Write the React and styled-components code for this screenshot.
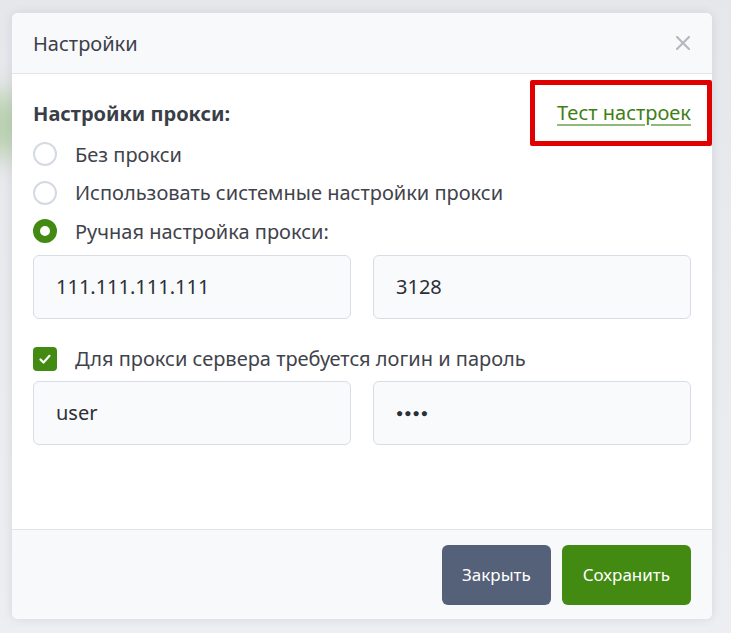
import React from "react";
import styled, { createGlobalStyle } from "styled-components";

const Global = createGlobalStyle`
  html, body { margin: 0; padding: 0; }
  body {
    background: #e9eaee;
    font-family: "Noto Sans", "Open Sans", sans-serif;
    width: 731px; height: 633px; overflow: hidden;
  }
`;

const Page = styled.div`
  position: relative;
  width: 731px;
  height: 633px;
  padding: 13px 19px 14px 12px;
  box-sizing: border-box;
  background: linear-gradient(180deg, #e6e7eb 0%, #eceef1 100%);
`;

const Blur = styled.div`
  position: absolute;
  left: -30px;
  top: 95px;
  width: 60px;
  height: 60px;
  background: #b9d0b0;
  filter: blur(14px);
`;

const Modal = styled.div`
  position: relative;
  height: 100%;
  background: #fff;
  border-radius: 6px;
  box-shadow: 0 0 10px rgba(60, 64, 80, 0.12);
  display: flex;
  flex-direction: column;
  overflow: hidden;
`;

const Header = styled.div`
  height: 60px;
  flex: none;
  background: #f8f9fa;
  border-bottom: 1px solid #e2e5ea;
  display: flex;
  align-items: center;
  justify-content: space-between;
  padding: 0 22px 0 21px;
`;

const Title = styled.div`
  font-size: 20px;
  color: #3c4049;
`;

const Close = styled.button`
  border: none;
  background: none;
  padding: 0;
  color: #b4b9c1;
  display: flex;
  cursor: pointer;
`;

const Body = styled.div`
  flex: 1;
  padding: 16px 21px 0 21px;
  display: flex;
  flex-direction: column;
`;

const TopRow = styled.div`
  display: flex;
  justify-content: space-between;
  align-items: center;
  height: 46px;
`;

const Heading = styled.div`
  font-weight: 700;
  font-size: 20px;
  color: #3a3e47;
`;

const LinkWrap = styled.div`
  position: relative;
  line-height: 27px;
`;

const TestLink = styled.a`
  font-size: 20px;
  color: #3f7f17;
  text-decoration: underline;
  text-decoration-color: #93b87c;
  text-underline-offset: 4px;
  text-decoration-thickness: 2px;
`;

const Highlight = styled.div`
  position: absolute;
  left: -27px;
  right: -21px;
  top: -19px;
  bottom: -18px;
  border: 5px solid #e10000;
  border-radius: 2px;
  pointer-events: none;
`;

const Options = styled.div`
  display: flex;
  flex-direction: column;
  margin-top: -1px;
`;

const Option = styled.label`
  display: flex;
  align-items: center;
  gap: 18px;
  height: 38.5px;
  font-size: 20px;
  color: #3f434b;
`;

const Radio = styled.span`
  width: 24px;
  height: 24px;
  box-sizing: border-box;
  border-radius: 50%;
  flex: none;
  border: ${(p) => (p.checked ? "7px solid #438a12" : "2px solid #d5d9e3")};
  background: #fff;
`;

const Check = styled.span`
  width: 24px;
  height: 24px;
  border-radius: 4px;
  background: #438a12;
  flex: none;
  display: flex;
  align-items: center;
  justify-content: center;
`;

const Fields = styled.div`
  display: grid;
  grid-template-columns: 1fr 1fr;
  gap: 22px;
  margin-top: ${(p) => p.mt}px;
`;

const Field = styled.div`
  height: 64px;
  box-sizing: border-box;
  border: 1px solid #d8dce4;
  border-radius: 6px;
  background: #f9fafb;
  display: flex;
  align-items: center;
  padding: 0 22px;
  font-size: 20px;
  color: #2b2f36;
`;

const Dots = styled.span`
  font-size: 12px;
  letter-spacing: 1px;
  color: #2b2f36;
`;

const CheckRow = styled(Option)`
  margin-top: 20px;
  height: 40px;
`;

const Footer = styled.div`
  height: 89px;
  flex: none;
  background: #f8f9fa;
  border-top: 1px solid #e2e5ea;
  display: flex;
  align-items: center;
  justify-content: flex-end;
  gap: 11px;
  padding: 0 21px;
`;

const Button = styled.button`
  height: 60px;
  border: none;
  border-radius: 6px;
  padding: 0 ${(p) => p.px}px;
  font-family: inherit;
  font-size: 17px;
  color: #fff;
  background: ${(p) => p.bg};
`;

export default function App() {
  return (
    <>
      <Global />
      <Page>
        <Blur />
        <Modal>
          <Header>
            <Title>Настройки</Title>
            <Close aria-label="close">
              <svg width="14" height="14" viewBox="0 0 14 14">
                <path d="M1 1L13 13M13 1L1 13" stroke="currentColor" strokeWidth="2.2" strokeLinecap="round" />
              </svg>
            </Close>
          </Header>
          <Body>
            <TopRow>
              <Heading>Настройки прокси:</Heading>
              <LinkWrap>
                <TestLink>Тест настроек</TestLink>
                <Highlight />
              </LinkWrap>
            </TopRow>
            <Options>
              <Option><Radio /> Без прокси</Option>
              <Option><Radio /> Использовать системные настройки прокси</Option>
              <Option><Radio checked /> Ручная настройка прокси:</Option>
            </Options>
            <Fields mt={4}>
              <Field>111.111.111.111</Field>
              <Field>3128</Field>
            </Fields>
            <CheckRow>
              <Check>
                <svg width="14" height="14" viewBox="0 0 14 14">
                  <path d="M2.5 7.5L5.5 10.5L11.5 3.8" fill="none" stroke="#fff" strokeWidth="2.2" strokeLinecap="round" strokeLinejoin="round" />
                </svg>
              </Check>
              Для прокси сервера требуется логин и пароль
            </CheckRow>
            <Fields mt={2}>
              <Field>user</Field>
              <Field><Dots>●●●●</Dots></Field>
            </Fields>
          </Body>
          <Footer>
            <Button bg="#556079" px={20}>Закрыть</Button>
            <Button bg="#438a12" px={21}>Сохранить</Button>
          </Footer>
        </Modal>
      </Page>
    </>
  );
}
